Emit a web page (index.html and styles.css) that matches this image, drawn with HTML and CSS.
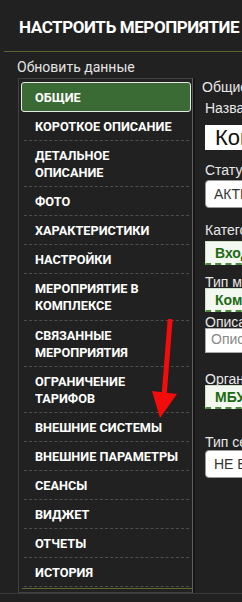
FILE: index.html
```html
<!DOCTYPE html>
<html lang="ru">
<head>
    <meta charset="UTF-8">
    <meta name="viewport" content="width=device-width, initial-scale=1.0">
    <title>Настроить мероприятие</title>
    <link rel="stylesheet" href="styles.css">
</head>
<body>
    <div class="page">
        <h1 class="title">НАСТРОИТЬ МЕРОПРИЯТИЕ</h1>
        <div class="rule"></div>
        <div class="refresh">Обновить данные</div>

        <div class="layout">
            <div class="menu">
                <ul class="menu-list">
                    <li class="menu-item active">ОБЩИЕ</li>
                    <li class="menu-item">КОРОТКОЕ ОПИСАНИЕ</li>
                    <li class="menu-item">ДЕТАЛЬНОЕ<br>ОПИСАНИЕ</li>
                    <li class="menu-item">ФОТО</li>
                    <li class="menu-item">ХАРАКТЕРИСТИКИ</li>
                    <li class="menu-item">НАСТРОЙКИ</li>
                    <li class="menu-item">МЕРОПРИЯТИЕ В<br>КОМПЛЕКСЕ</li>
                    <li class="menu-item">СВЯЗАННЫЕ<br>МЕРОПРИЯТИЯ</li>
                    <li class="menu-item">ОГРАНИЧЕНИЕ<br>ТАРИФОВ</li>
                    <li class="menu-item">ВНЕШНИЕ СИСТЕМЫ</li>
                    <li class="menu-item">ВНЕШНИЕ ПАРАМЕТРЫ</li>
                    <li class="menu-item">СЕАНСЫ</li>
                    <li class="menu-item">ВИДЖЕТ</li>
                    <li class="menu-item">ОТЧЕТЫ</li>
                    <li class="menu-item">ИСТОРИЯ</li>
                </ul>
            </div>

            <div class="content">
                <div class="section">Общие сведения</div>

                <label class="field-label name-label">Название</label>
                <div class="input input-big">Конференция</div>

                <label class="field-label status-label">Статус</label>
                <div class="input input-select">АКТИВНО</div>

                <label class="field-label category-label">Категория</label>
                <div class="input input-green category-input">Входящие</div>

                <label class="field-label type-label">Тип мероприятия</label>
                <div class="input input-green">Комплексное</div>

                <label class="field-label desc-label">Описание</label>
                <div class="input input-area">Описание</div>

                <label class="field-label org-label">Организатор</label>
                <div class="input input-green">МБУ</div>

                <label class="field-label session-label">Тип сеанса</label>
                <div class="input input-select session-input">НЕ ВЫБРАНО</div>
            </div>
        </div>
        <div class="bottom-rule"></div>

        <!-- стрелка поверх меню -->
        <svg class="arrow" width="40" height="110" viewBox="0 0 40 110">
            <path d="M27 2 L21 78" stroke="#f20c0c" stroke-width="5" stroke-linecap="round" fill="none"/>
            <path d="M9 72 L34 75 L17 99 Z" fill="#f20c0c"/>
        </svg>
    </div>
</body>
</html>
```

FILE: styles.css
```css
/* основной фон */
body {
    margin: 0;
    background: #212121;
    font-family: Roboto, "Liberation Sans", sans-serif;
    color: #fff;
    overflow: hidden;
}
.page {
    position: relative;
    width: 242px;
    height: 602px;
}
.title {
    margin: 0;
    padding: 17px 0 0 19px;
    height: 34px;
    font-size: 17px;
    font-weight: 700;
    letter-spacing: -0.4px;
    line-height: 20px;
    white-space: nowrap;
}
.rule {
    margin-left: 4px;
    border-top: 1px solid #5c6232;
}
.refresh {
    padding: 7px 0 0 17px;
    height: 19px;
    font-size: 14px;
    line-height: 16px;
    color: #e4e4e4;
}

/* меню слева */
.layout {
    display: flex;
}
.menu {
    margin-left: 18px;
    width: 170px;
    border: 1px solid #414141;
    border-right: 0;
    padding: 3px 0 3px 3px;
    flex-shrink: 0;
}
.menu-list {
    list-style: none;
    margin: 0;
    padding: 0 0 1px;
    border-bottom: 1px solid #5e6a30;
}
.menu-item {
    margin: 0 3px 0 2px;
    padding: 6px 0 5.1px 11px;
    font-size: 12.7px;
    font-weight: 700;
    line-height: 17px;
    border-bottom: 1px dashed #4e4e4e;
    white-space: nowrap;
}
.menu-item.active {
    margin: 0 1px 0 -1px;
    padding: 6px 0 5px 13px;
    background: #3b6b35;
    border: 1px solid #e8e8e8;
    border-radius: 3px;
}

/* форма справа */
.content {
    flex: 1;
    min-width: 0;
    overflow: hidden;
    border-left: 1px solid #5e5e5e;
    box-shadow: inset 2px 0 0 #161616;
    padding: 2px 0 0 9px;
    font-family: "Liberation Sans", Arial, sans-serif;
    white-space: nowrap;
}
.section {
    font-size: 14px;
    line-height: 14px;
    color: #e8e8e8;
}
.field-label {
    display: block;
    margin-left: 3px;
    font-size: 14px;
    line-height: 14px;
    color: #e8e8e8;
}
.name-label { margin-top: 7px; }
.status-label { margin-top: 13px; }
.category-label { margin-top: 15px; }
.type-label { margin-top: 10px; }
.desc-label { margin-top: 3px; }
.org-label { margin-top: 19px; }
.session-label { margin-top: 26px; }

.input {
    margin: -1px 0 0 3px;
    width: 200px;
    box-sizing: border-box;
    font-size: 14px;
    color: #333;
    background: #fff;
}
.input-big {
    height: 25px;
    margin-top: 10px;
    padding-left: 10px;
    font-size: 22px;
    line-height: 26px;
    color: #111;
}
.input-select {
    height: 28px;
    margin-top: 3px;
    padding-left: 8px;
    line-height: 26px;
    border-radius: 4px;
    border: 1px solid #999;
}
.session-input {
    margin-top: 1px;
}
.input-green {
    height: 24px;
    padding-left: 9px;
    line-height: 22px;
    background: #f3f8f0;
    border: 1px solid #cfe0c8;
    border-bottom: 2px dashed #4b8a3a;
    color: #1c6a14;
    font-weight: 700;
}
.category-input {
    margin-top: 4px;
}
.input-area {
    height: 25px;
    padding: 2px 0 0 5px;
    line-height: 16px;
    color: #888;
    border: 1px solid #aaa;
}
.bottom-rule {
    border-top: 1px solid #3a3a3a;
}
.arrow {
    position: absolute;
    left: 143px;
    top: 319px;
}
```
